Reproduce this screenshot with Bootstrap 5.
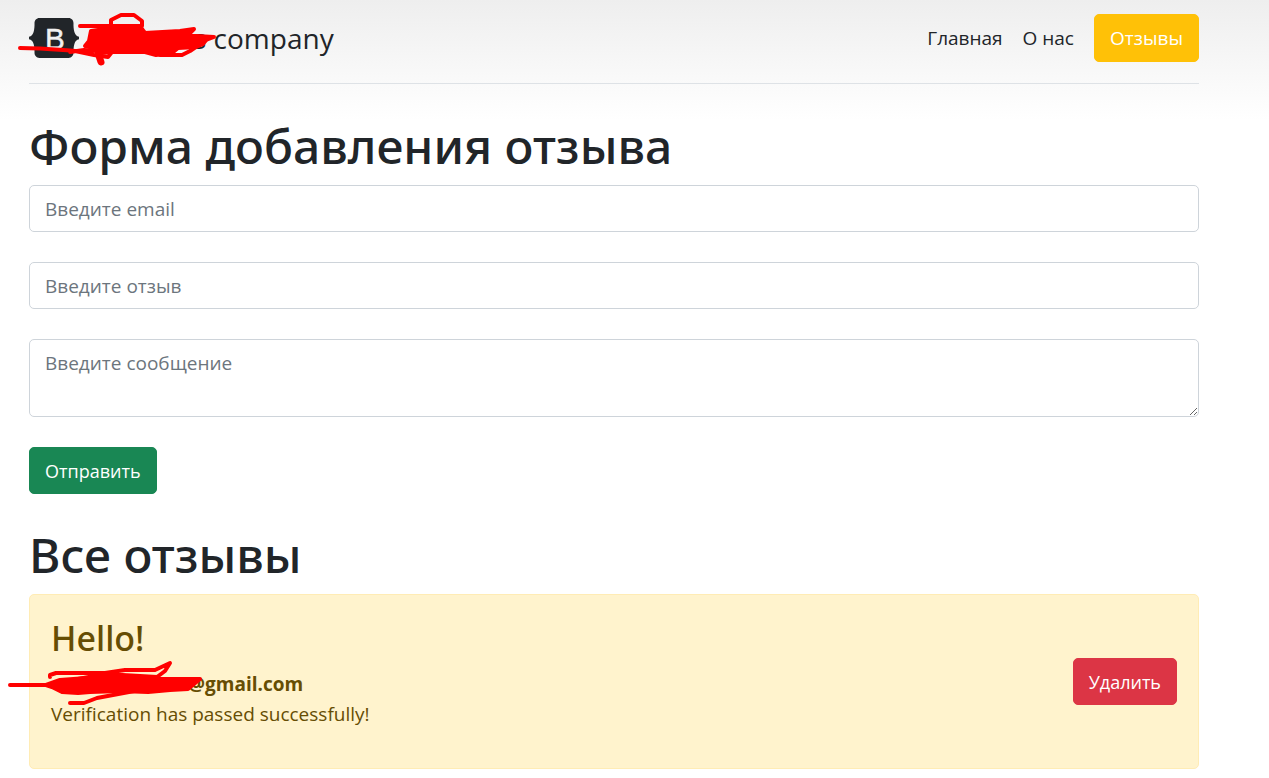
<!DOCTYPE html>
<html lang="ru">
<head>
<meta charset="utf-8">
<meta name="viewport" content="width=device-width, initial-scale=1">
<title>Отзывы</title>
<link href="https://cdn.jsdelivr.net/npm/bootstrap@5.3.0/dist/css/bootstrap.min.css" rel="stylesheet">
<style>
  body {
    font-family: "Open Sans", "Noto Sans", sans-serif;
    font-size: 19px;
    line-height: 30px;
    background: #fff linear-gradient(180deg, #eee, #fff 120px) no-repeat;
  }
  .page { padding: 14px 70px 9px 29px; }
  .page-header { padding-bottom: 21px; margin-bottom: 32px; }
  .brand { font-size: 28px; line-height: 40px; color: #212529; }
  .top-nav { gap: 20px; }
  .top-link { color: #212529; }
  .page .btn, .page .form-control { font-size: 18px; line-height: 29px; padding: 9px 15px 7px; border-radius: 5px; }
  .page .top-nav .btn { font-size: 19px; line-height: 30px; padding: 8px 15px; }
  .page .form-control { font-size: 19px; border-color: #ced4da; color: #212529; }
  .page .form-control::placeholder { color: #6c757d; opacity: 1; }
  .page textarea.form-control { min-height: 78px; height: 78px; }
  .review-form { gap: 30px; margin-bottom: 31px; }
  .page h1 { font-family: "Noto Sans", sans-serif; font-size: 48px; line-height: 60px; font-weight: 500; margin-bottom: 9px; }
  .review { background: #fff3cd; border-color: #ffecb5; color: #664d03; padding: 22px 21px; border-radius: 5px; }
  .review h3 { font-family: "Noto Sans", sans-serif; font-size: 34px; line-height: 42px; font-weight: 500; margin-bottom: 10px; }
  .review p { margin-bottom: 17px; }
  .redacted { position: relative; display: inline-block; height: 20px; }
  .redacted svg { position: absolute; overflow: visible; pointer-events: none; }
  .redacted-brand { width: 114px; }
  .redacted-brand svg { left: -66px; top: -20px; }
  .redacted-mail { width: 137px; }
  .redacted-mail svg { left: -51px; top: -8px; }
  .scribble { fill: none; stroke: #f00; stroke-linecap: round; stroke-linejoin: round; }
</style>
</head>
<body>
<div class="page">
  <header class="page-header d-flex flex-wrap align-items-center justify-content-between border-bottom">
    <a href="#" class="brand d-flex align-items-center text-decoration-none">
      <svg width="50" height="40" viewBox="0 0 118 94" role="img" aria-label="Bootstrap">
        <path fill="#212529" d="M24.500 0c-6.700 0-11.700 5.900-11.500 12.300.2 6.100-.1 14.100-2.100 20.600C8.900 39.400 5.500 43.500 0 44v6c5.500.5 8.900 4.600 10.900 11.100 2 6.500 2.300 14.500 2.100 20.600C12.800 88.100 17.800 94 24.500 94h69c6.700 0 11.700-5.900 11.500-12.300-.2-6.100.1-14.100 2.100-20.600 2-6.500 5.400-10.600 10.900-11.100v-6c-5.500-.5-8.900-4.600-10.900-11.100-2-6.500-2.300-14.500-2.100-20.600C105.200 5.900 100.200 0 93.500 0z"/>
        <text x="61" y="72" text-anchor="middle" font-family="Liberation Sans, sans-serif" font-size="70" fill="#f1f1f1" stroke="#f1f1f1" stroke-width="1">B</text>
      </svg>
      <span class="redacted redacted-brand"><svg width="200" height="60" aria-hidden="true">
        <g class="scribble" stroke-width="4" transform="translate(-13 -7)">
          <path d="M20 47 C45 47 60 49 75 50 L94 54 L108 56 L112 51 L84 49 L70 51"/>
          <path d="M80 25 H142 V20 L134 14 H121 L111 19 V26"/>
          <path fill="#f00" d="M91 30 L112 27 L142 28 L145 32 L180 30 L194 28 L190 32 L178 34 L214 36 L206 39 L203 43 L196 46 L178 47 L172 52 L156 54 L145 51 L112 51 L102 52 L98 48 L85 45 L89 40 Z"/>
          <path d="M206 39 L190 50 L182 54 H160"/>
          <path stroke-width="7" d="M98 52 L101 61"/>
        </g>
      </svg></span>
      <span>s company</span>
    </a>
    <nav class="top-nav d-flex align-items-center" aria-label="Основная навигация">
      <a class="top-link text-decoration-none" href="#">Главная</a>
      <a class="top-link text-decoration-none" href="#">О нас</a>
      <a class="btn btn-warning text-white" href="#">Отзывы</a>
    </nav>
  </header>
  <main>
    <h1>Форма добавления отзыва</h1>
    <form class="review-form d-flex flex-column align-items-start">
      <input type="email" class="form-control" placeholder="Введите email" aria-label="Введите email">
      <input type="text" class="form-control" placeholder="Введите отзыв" aria-label="Введите отзыв">
      <textarea class="form-control" placeholder="Введите сообщение" aria-label="Введите сообщение"></textarea>
      <button type="button" class="btn btn-success">Отправить</button>
    </form>
    <h1>Все отзывы</h1>
    <div class="alert review d-flex align-items-center justify-content-between mb-0">
      <div>
        <h3>Hello!</h3>
        <b><span class="redacted redacted-mail"><svg width="200" height="50" aria-hidden="true">
          <g class="scribble" stroke-width="4" transform="translate(0 -663)">
            <path d="M10 685 H50 M50 677 L50 675 L56 673 H105 L125 670 H155 L170 663 L165 671 L157 677 L140 676 L105 674 L78 679"/>
            <path fill="#f00" d="M46 685 L60 680 L100 677 L140 679 L170 679 L200 679 L194 684 L188 689 L170 690 L148 692 L120 691 L90 692 L78 693 L62 692 L52 687 Z"/>
            <path d="M70 703 H84 L97 698 L145 689"/>
          </g>
        </svg></span>@gmail.com</b>
        <p>Verification has passed successfully!</p>
      </div>
      <button type="button" class="btn btn-danger">Удалить</button>
    </div>
  </main>
</div>
<script src="https://cdn.jsdelivr.net/npm/bootstrap@5.3.0/dist/js/bootstrap.bundle.min.js"></script>
</body>
</html>
